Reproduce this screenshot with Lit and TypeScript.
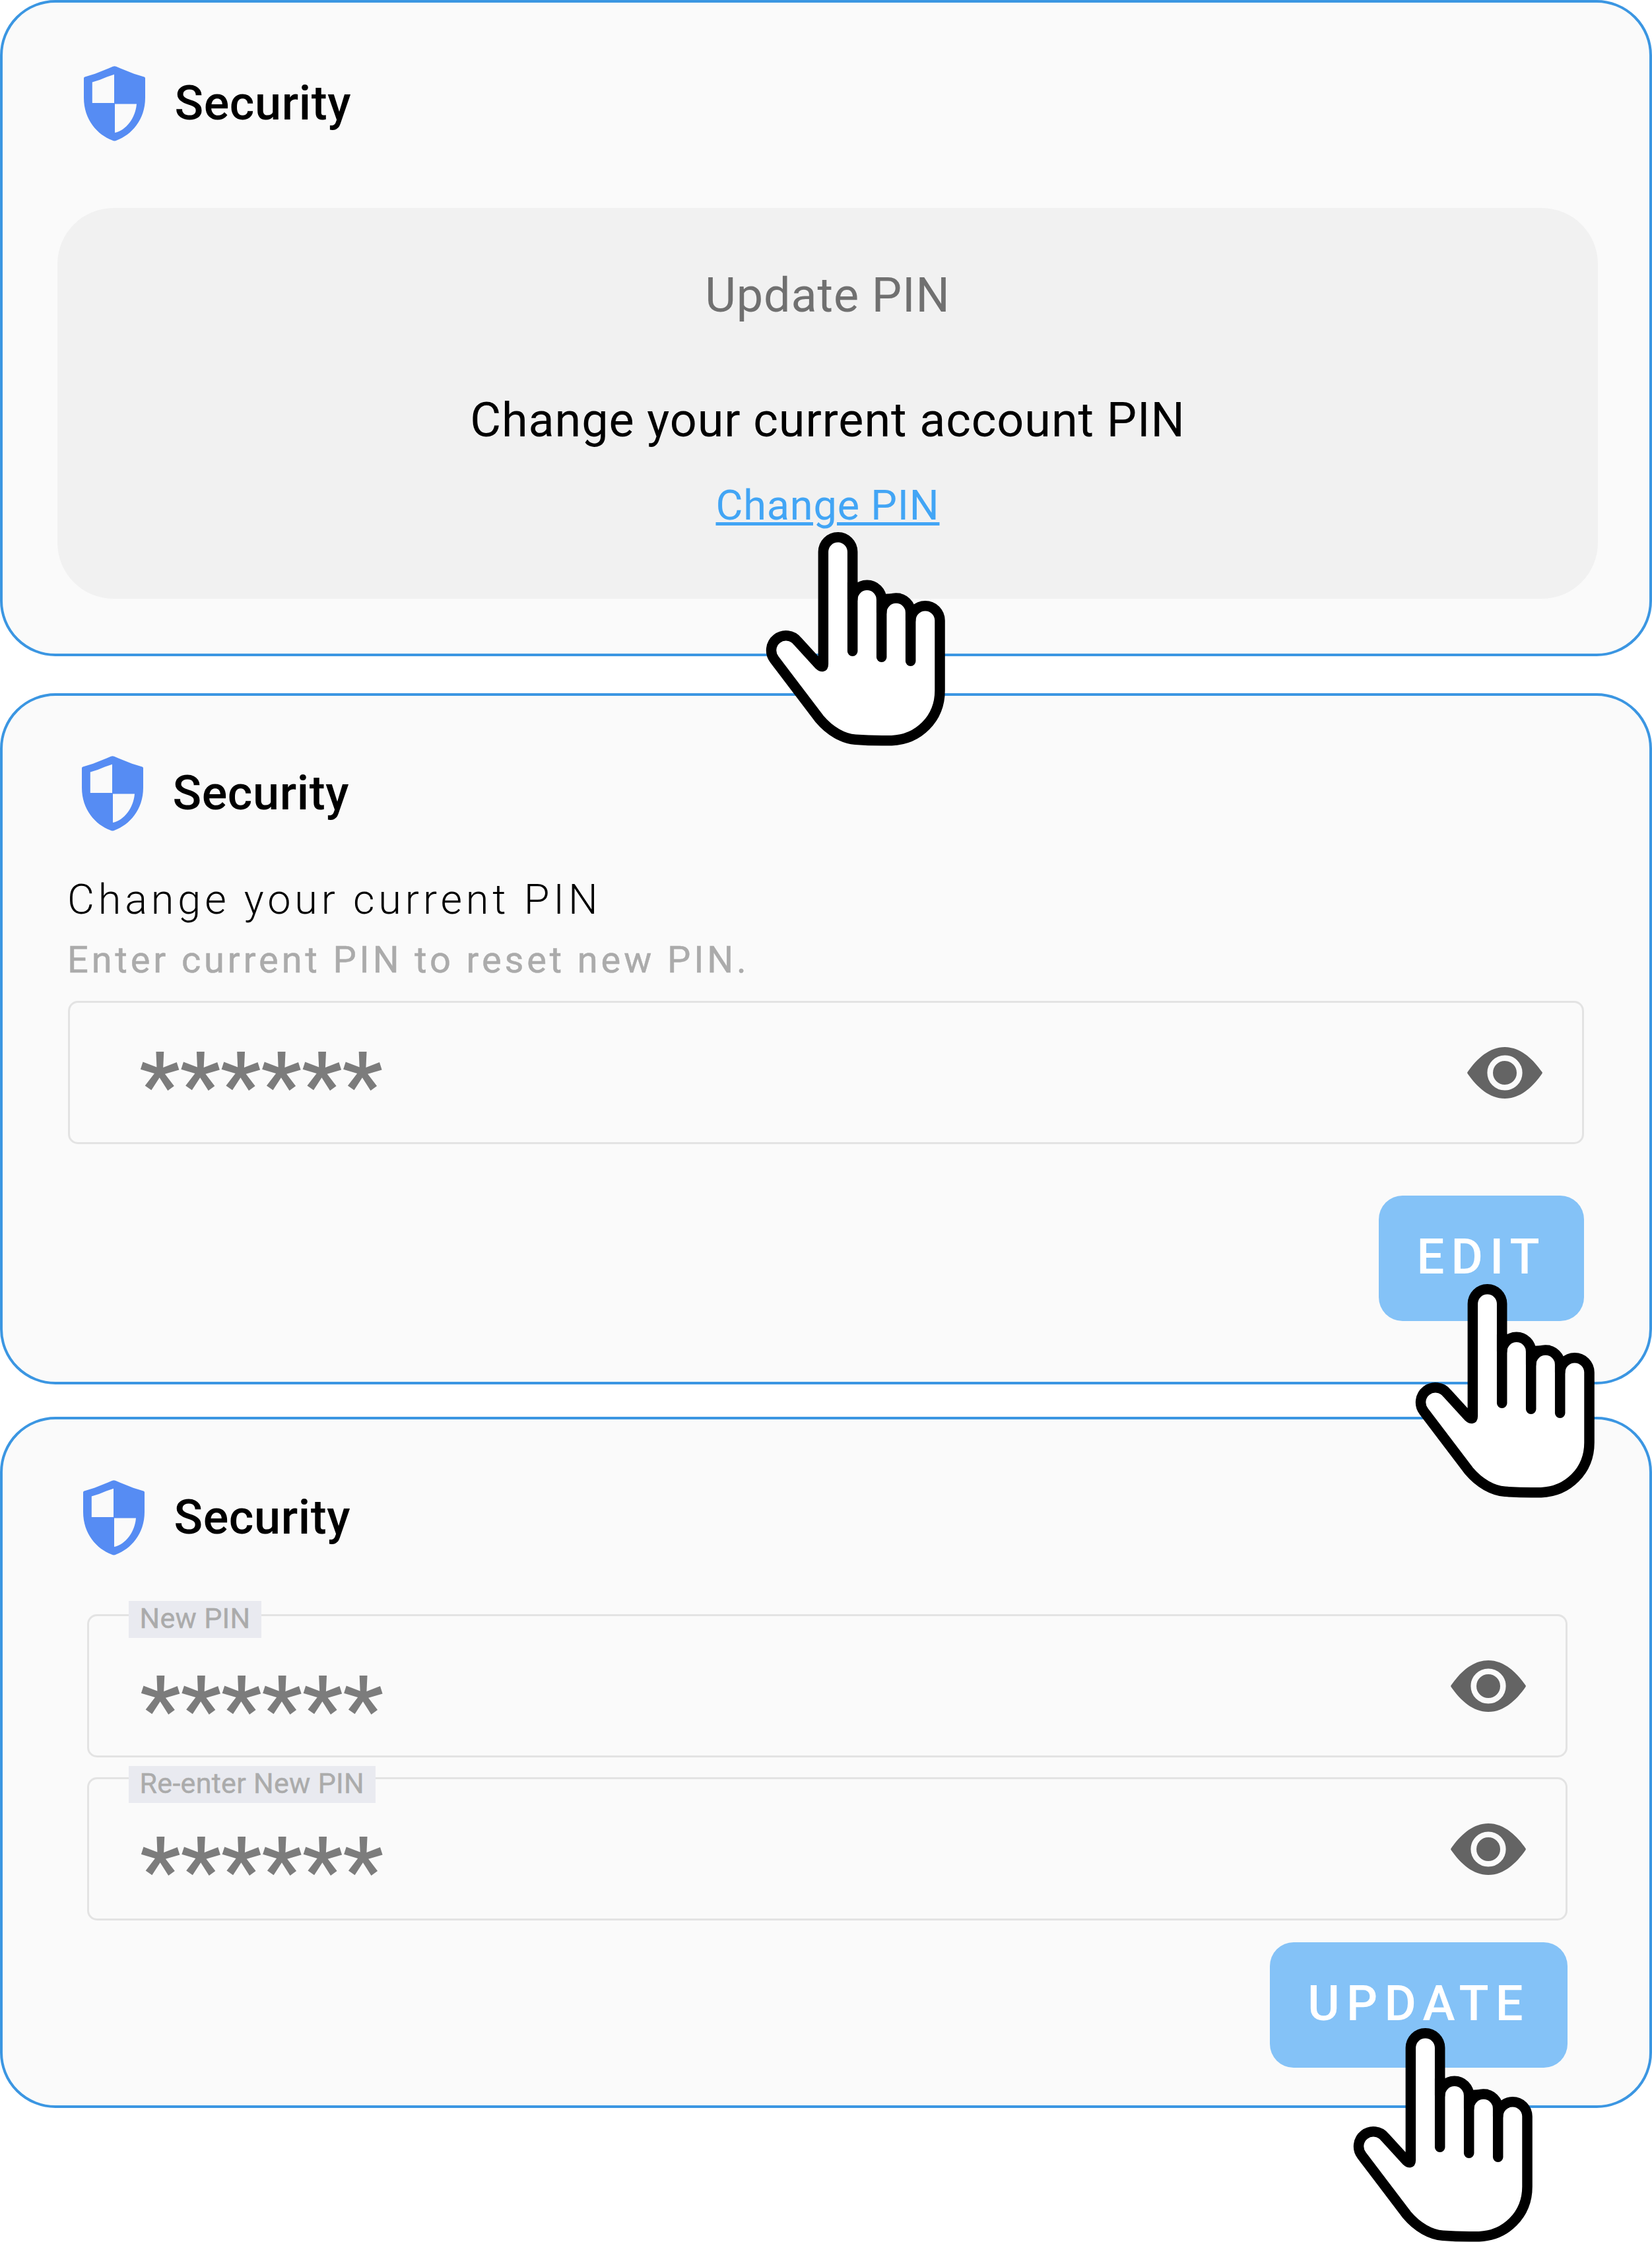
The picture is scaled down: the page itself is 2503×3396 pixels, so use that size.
import { LitElement, html, css, svg } from "lit";
import { customElement, property } from "lit/decorators.js";

@customElement("shield-icon")
class ShieldIcon extends LitElement {
  static styles = css`
    :host { display: block; width: 93px; height: 114px; flex: none; }
    svg { display: block; }
    .body { fill: #568cf3; }
    .pane { fill: #fafafa; }
  `;
  render() {
    return html`<svg width="93" height="114" viewBox="0 0 93 114">
      <path class="body" d="M44 .8Q46.5 -.4 49 .8L56 3.7L76 11.7L91.500 16.400Q93 17 93 18.500V48C93 82 72 104 50 112.6Q46.5 114.4 43 112.6C21 104 0 82 0 48V18.500Q0 17 1.500 16.400L17 11.700L37 3.700Z"/>
      <path class="pane" d="M46 12.8V56H12.8V24.4L24 21L35 16.500Z"/>
      <path class="pane" d="M47 57.6H80C78.500 78 64 98 47 101Z"/>
    </svg>`;
  }
}

@customElement("eye-icon")
class EyeIcon extends LitElement {
  static styles = css`
    :host { display: block; width: 114px; height: 78px; flex: none; }
    svg { display: block; }
    .lid { fill: #646464; }
    .ring { fill: none; stroke: #fafafa; stroke-width: 8.600; }
  `;
  render() {
    return html`<svg width="114" height="78" viewBox="0 0 114 78">
      <path class="lid" d="M.6 40.200Q-.3 39 .6 37.800C15 17 34 0 57 0S99 17 113.400 37.800Q114.300 39 113.400 40.200C99 61 80 78 57 78S15 61 .6 40.200Z"/>
      <circle class="ring" cx="57" cy="39" r="22.300"/>
    </svg>`;
  }
}

@customElement("hand-pointer")
class HandPointer extends LitElement {
  static styles = css`
    :host { display: block; width: 271.400px; height: 324px; }
    svg { display: block; overflow: visible; }
    .line { fill: none; stroke: #000; stroke-width: 46.500; stroke-linecap: round; stroke-linejoin: round; }
    .skin { fill: #fff; stroke: #000; stroke-width: 46.500; stroke-linejoin: round; }
    .knuckle { fill: #000; }
  `;
  render() {
    const fingers = ["M392 230V541", "M524 300V568", "M656 360V586"];
    return html`<svg width="271.400" height="324" viewBox="0 0 814 972">
      <path class="skin" d="M259 600V89.500A66.500 66.500 0 0 1 392 89.500V307A66 66 0 0 1 524 307V366A66 66 0 0 1 656 366V401.500A66.500 66.500 0 0 1 789 401.500V720C789 850 690 943 570 947Q480 949 405 943C350 938 290 906 242 849L37 579A66 66 0 0 1 142 496L240 603Q259 620 259 600Z"/>
      ${fingers.map((d) => svg`<path class="line" d=${d}/>`)}
      <path class="knuckle" d="M536 281L590 278H612V300L545 320Z"/>
    </svg>`;
  }
}

@customElement("section-title")
class SectionTitle extends LitElement {
  static styles = css`
    :host { display: flex; align-items: flex-start; height: 114px; }
    .text {
      margin: 14px 0 0 44.500px;
      font: 500 72px/85px Roboto, sans-serif;
      letter-spacing: 0.600px;
      color: #000;
      white-space: nowrap;
    }
  `;
  render() {
    return html`<shield-icon></shield-icon><div class="text"><slot></slot></div>`;
  }
}

@customElement("pin-field")
class PinField extends LitElement {
  @property() label = "";
  @property() value = "";
  static styles = css`
    :host {
      display: flex;
      justify-content: space-between;
      position: relative;
      box-sizing: border-box;
      height: 217px;
      border: 3px solid #e3e3e3;
      border-radius: 15px;
      padding: 0 60px 0 77px;
    }
    .value {
      padding-top: var(--value-top, 44px);
      font: 500 139px/163px Roboto, sans-serif;
      letter-spacing: -0.200px;
      color: #7c7c7c;
      height: 163px;
    }
    eye-icon { align-self: center; }
    .label {
      position: absolute;
      left: 60px;
      top: var(--label-top, -23px);
      padding: var(--label-pad, 1px) 16.500px 5px;
      background: #e9eaf0;
      font: 400 43px/50px Roboto, sans-serif;
      letter-spacing: 0.300px;
      color: #ababab;
      -webkit-text-stroke: 0.400px #ababab;
      white-space: nowrap;
    }
  `;
  render() {
    return html`
      ${this.label ? html`<div class="label">${this.label}</div>` : ""}
      <div class="value">${this.value}</div>
      <eye-icon></eye-icon>
    `;
  }
}

@customElement("app-root")
class AppRoot extends LitElement {
  static styles = css`
    :host {
      display: block;
      width: 2503px;
      height: 3396px;
      overflow: hidden;
      background: #fff;
      font-family: Roboto, sans-serif;
    }
    .card {
      position: relative;
      box-sizing: border-box;
      width: 2503px;
      height: 1047px;
      border: 4px solid #3b96e2;
      border-radius: 84px;
      background: #fafafa;
      display: flex;
      flex-direction: column;
    }
    .overview { height: 994px; padding: 96px 78px 0 83px; }
    .current { margin-top: 56px; padding: 91px 99px 0; }
    .renew { margin-top: 49px; padding: 92px 124px 0 128px; }
    .overview section-title { margin-left: 40px; }
    .current section-title { margin-left: 21px; }
    .renew section-title { margin-left: -6px; }
    .panel {
      margin-top: 101px;
      height: 592px;
      box-sizing: border-box;
      padding-top: 90px;
      border-radius: 85px;
      background: #f1f1f1;
      display: flex;
      flex-direction: column;
      align-items: center;
    }
    .caption, .lead { font-size: 72px; line-height: 85px; letter-spacing: 0.880px; }
    .caption { color: #707070; }
    .lead { color: #000; margin-top: 104px; }
    .link {
      margin-top: 50px;
      font-size: 63px;
      line-height: 73px;
      letter-spacing: 0.800px;
      color: #42a5f5;
      text-decoration: underline;
      text-decoration-thickness: 5px;
      text-underline-offset: 4px;
    }
    .heading {
      margin: 67px 0 0 -1px;
      font-weight: 300;
      font-size: 63px;
      line-height: 73px;
      letter-spacing: 5.850px;
      color: #000;
    }
    .hint {
      margin: 22px 0 0 -1px;
      font-size: 56px;
      line-height: 66px;
      letter-spacing: 4.880px;
      color: #ababab;
      -webkit-text-stroke: 0.500px #ababab;
    }
    .current pin-field { margin-top: 29px; padding-left: 105px; }
    .first { margin-top: 89px; --value-top: 60px; }
    .second { margin-top: 30px; --value-top: 57px; --label-top: -20px; --label-pad: 0.500px; }
    .button {
      align-self: flex-end;
      height: 190px;
      padding: 0 57px 5px;
      border: 0;
      border-radius: 36px;
      background: #84c2f7;
      color: #fff;
      font: 500 74px/87px Roboto, sans-serif;
      letter-spacing: 10.350px;
    }
    .edit { margin-top: 78px; }
    .update { margin-top: 33px; }
    hand-pointer { position: absolute; z-index: 1; }
    .on-link { left: 1157px; top: 802px; }
    .on-edit { left: 2140.500px; top: 891px; }
    .on-update { left: 2047px; top: 922px; }
  `;
  render() {
    return html`
      <section class="card overview">
        <section-title>Security</section-title>
        <div class="panel">
          <div class="caption">Update PIN</div>
          <div class="lead">Change your current account PIN</div>
          <a class="link">Change PIN</a>
        </div>
        <hand-pointer class="on-link"></hand-pointer>
      </section>
      <section class="card current">
        <section-title>Security</section-title>
        <div class="heading">Change your current PIN</div>
        <div class="hint">Enter current PIN to reset new PIN.</div>
        <pin-field value="******"></pin-field>
        <button class="button edit">EDIT</button>
        <hand-pointer class="on-edit"></hand-pointer>
      </section>
      <section class="card renew">
        <section-title>Security</section-title>
        <pin-field class="first" label="New PIN" value="******"></pin-field>
        <pin-field class="second" label="Re-enter New PIN" value="******"></pin-field>
        <button class="button update">UPDATE</button>
        <hand-pointer class="on-update"></hand-pointer>
      </section>
    `;
  }
}
